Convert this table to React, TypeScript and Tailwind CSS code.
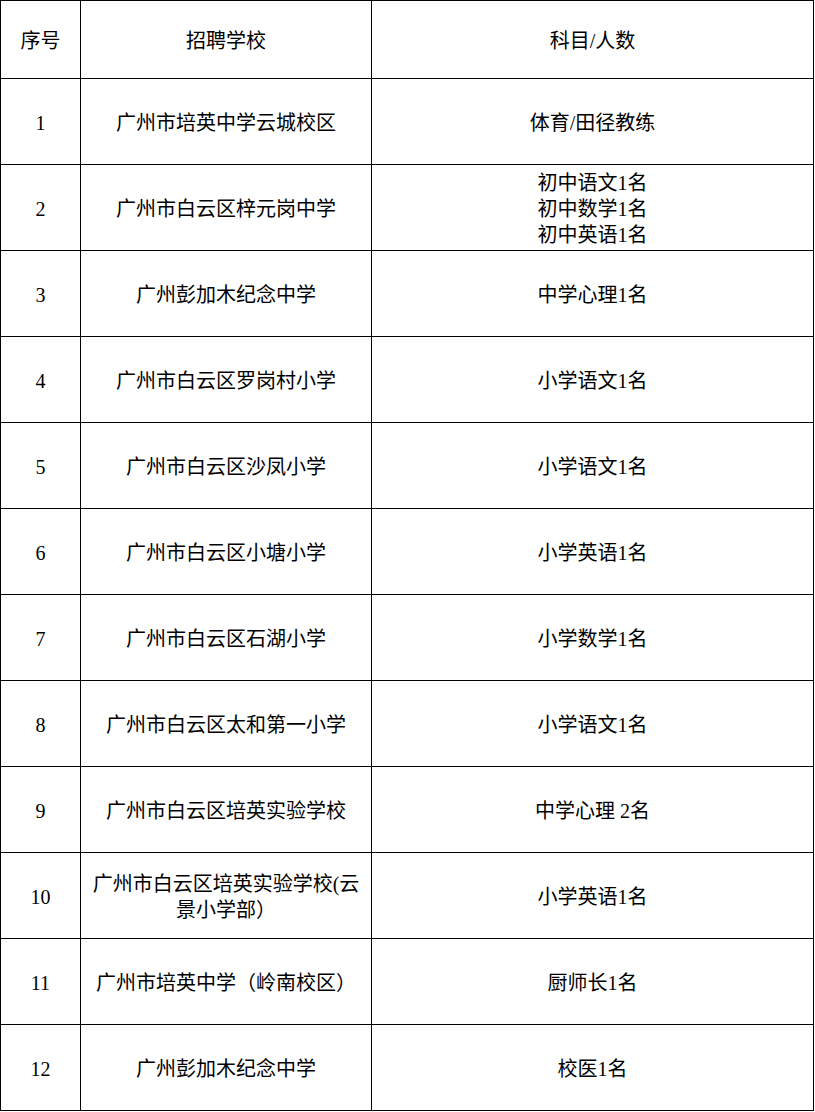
const rows: { no: number; school: string; subject: string[] }[] = [
  { no: 1, school: "广州市培英中学云城校区", subject: ["体育/田径教练"] },
  { no: 2, school: "广州市白云区梓元岗中学", subject: ["初中语文1名", "初中数学1名", "初中英语1名"] },
  { no: 3, school: "广州彭加木纪念中学", subject: ["中学心理1名"] },
  { no: 4, school: "广州市白云区罗岗村小学", subject: ["小学语文1名"] },
  { no: 5, school: "广州市白云区沙凤小学", subject: ["小学语文1名"] },
  { no: 6, school: "广州市白云区小塘小学", subject: ["小学英语1名"] },
  { no: 7, school: "广州市白云区石湖小学", subject: ["小学数学1名"] },
  { no: 8, school: "广州市白云区太和第一小学", subject: ["小学语文1名"] },
  { no: 9, school: "广州市白云区培英实验学校", subject: ["中学心理 2名"] },
  { no: 10, school: "广州市白云区培英实验学校(云景小学部）", subject: ["小学英语1名"] },
  { no: 11, school: "广州市培英中学（岭南校区）", subject: ["厨师长1名"] },
  { no: 12, school: "广州彭加木纪念中学", subject: ["校医1名"] },
]

const cell = "border-r border-b border-black flex items-center justify-center text-center px-2 pt-[3px]"

export default function App() {
  return (
    <div
      className="bg-white text-black text-[20px] leading-[26px] w-[815px] min-h-[1112px]"
      style={{ fontFamily: "'Liberation Serif', 'Noto Sans CJK SC', serif" }}
    >
      <div className="w-[814px] grid grid-cols-[80px_291px_442px] border-t border-l border-black">
        {/* header */}
        <div className={`${cell} h-[78px]`}>序号</div>
        <div className={`${cell} h-[78px]`}>招聘学校</div>
        <div className={`${cell} h-[78px]`}>科目/人数</div>

        {rows.map((r) => (
          <>
            <div key={`n${r.no}`} className={`${cell} h-[86px]`}>{r.no}</div>
            <div key={`s${r.no}`} className={`${cell} h-[86px]`}>{r.school}</div>
            <div key={`j${r.no}`} className={`${cell} h-[86px] flex-col`}>
              {r.subject.map((s) => (
                <div key={s}>{s}</div>
              ))}
            </div>
          </>
        ))}
      </div>
    </div>
  )
}
